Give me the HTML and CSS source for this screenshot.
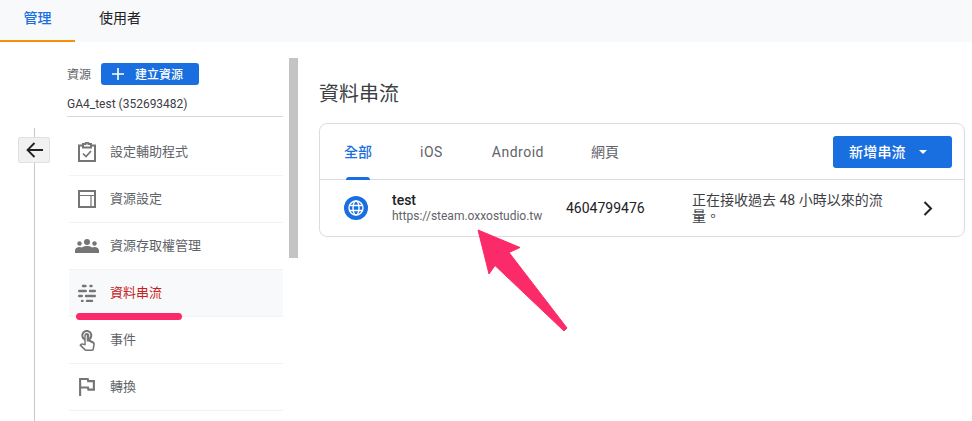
FILE: index.html
```html
<!DOCTYPE html>
<html lang="zh-Hant">
<head>
  <meta charset="UTF-8" />
  <meta name="viewport" content="width=device-width, initial-scale=1.0"/>
  <title>資料串流</title>
  <link rel="stylesheet" href="styles.css">
</head>
<body>
  <header class="topbar">
    <a class="top-tab active">管理</a>
    <a class="top-tab">使用者</a>
  </header>

  <div class="content">
    <div class="rail">
      <button class="back" aria-label="返回">
        <svg width="17" height="16" viewBox="0 0 17 16"><path d="M17 8H2M8.500 1L1.500 8l7 7" fill="none" stroke="#222" stroke-width="1.800"/></svg>
      </button>
    </div>

    <aside class="sidebar">
      <div class="prop-head">
        <span class="prop-label">資源</span>
        <button class="btn-create">
          <svg width="12" height="12" viewBox="0 0 12 12"><path d="M6 0v12M0 6h12" stroke="#fff" stroke-width="1.600"/></svg>
          <span>建立資源</span>
        </button>
      </div>
      <div class="prop-name">GA4_test (352693482)</div>

      <ul class="menu">
        <li class="menu-item">
          <svg class="ico" width="18" height="20" viewBox="0 0 18 20"><path d="M5 3.500H1v15.500h16V3.500h-4M5 5.500V2h2.500a1.500 1.500 0 0 1 3 0H13v3.500z" fill="none" stroke="#757575" stroke-width="2"/><path d="M5 11.500l3 3 5-5.500" fill="none" stroke="#757575" stroke-width="1.700"/></svg>
          <span>設定輔助程式</span>
        </li>
        <li class="menu-item">
          <svg class="ico" width="18" height="18" viewBox="0 0 18 18"><path d="M1 1h16v16H1z" fill="none" stroke="#757575" stroke-width="2"/><path d="M1 5.500h16M13 5.500V17" fill="none" stroke="#757575" stroke-width="1.200"/></svg>
          <span>資源設定</span>
        </li>
        <li class="menu-item">
          <svg class="ico" width="24" height="14" viewBox="0 0 24 14"><g fill="#757575"><circle cx="12" cy="3" r="3"/><circle cx="4.500" cy="4.500" r="2.200"/><circle cx="19.500" cy="4.500" r="2.200"/><path d="M0 14v-2.500C0 9.500 2 8 4.500 8c1 0 1.800.2 2.500.500C8 7.500 10 7 12 7s4 .5 5 1.500c.7-.3 1.500-.5 2.500-.5C22 8 24 9.500 24 11.500V14z"/></g></svg>
          <span>資源存取權管理</span>
        </li>
        <li class="menu-item current">
          <svg class="ico" width="18" height="18" viewBox="0 0 18 18"><g stroke="#757575" stroke-width="2.400" stroke-linecap="round"><path d="M5 2h2.500M12.500 2h1M1.200 7h6.600M12 7h4.800M1.200 12h2.600M8 12h8.800M4 17h.5M9 17h5"/></g></svg>
          <span>資料串流</span>
        </li>
        <li class="menu-item">
          <svg class="ico" width="17" height="21" viewBox="4 1 15.500 21"><path fill="#757575" d="M18.190 12.440l-3.240-1.620c1.290-1 2.120-2.560 2.120-4.320 0-3.030-2.470-5.500-5.500-5.500s-5.500 2.470-5.500 5.500c0 2.130 1.220 3.980 3 4.890v3.260c-2.150-.46-2.020-.44-2.260-.44-.53 0-1.030.21-1.410.59L4 16.220l5.090 5.090C9.520 21.750 10.120 22 10.740 22h6.050c.98 0 1.810-.7 1.970-1.670l.8-4.710c.22-1.300-.43-2.590-1.370-3.180zm-.17 2.850l-.8 4.710c-.04.24-.25.42-.49.42H10.740c-.13 0-.26-.05-.35-.15l-3.980-3.980.51-.51 3.580.75V6.500c0-.28.22-.5.5-.5s.5.22.5.5v6h1.760l4.240 2.120c.2.1.31.32.27.56zM8.070 6.500c0-1.980 1.610-3.500 3.500-3.500s3.500 1.520 3.500 3.500c0 .95-.38 1.810-1 2.440V6.500c0-1.380-1.120-2.500-2.500-2.500s-2.500 1.120-2.500 2.500v2.440c-.62-.63-1-1.490-1-2.440z"/></svg>
          <span>事件</span>
        </li>
        <li class="menu-item">
          <svg class="ico" width="15" height="18" viewBox="5 4 15 17"><path fill="#757575" d="M12.360 6l.4 2H18v6h-3.360l-.4-2H7V6h5.360M14 4H5v17h2v-7h5.600l.4 2h7V6h-5.600L14 4z"/></svg>
          <span>轉換</span>
        </li>
      </ul>
    </aside>

    <div class="scrollbar"></div>

    <main class="main">
      <h1 class="title">資料串流</h1>
      <section class="card">
        <div class="tabs">
          <a class="tab active">全部</a>
          <a class="tab latin tab-ios">iOS</a>
          <a class="tab latin tab-android">Android</a>
          <a class="tab tab-web">網頁</a>
          <button class="btn-add"><span>新增串流</span><i class="caret"></i></button>
        </div>
        <div class="stream">
          <svg class="globe" width="24" height="24" viewBox="0 0 24 24">
            <circle cx="12" cy="12" r="12" fill="#1a6fe0"/>
            <g fill="none" stroke="#fff" stroke-width="1.400">
              <circle cx="12" cy="12" r="7"/>
              <ellipse cx="12" cy="12" rx="3" ry="7"/>
              <path d="M5.500 9.500h13M5.500 14.500h13"/>
            </g>
          </svg>
          <div class="stream-name">
            <strong>test</strong>
            <span>https://steam.oxxostudio.tw</span>
          </div>
          <div class="stream-id">4604799476</div>
          <div class="stream-status">正在接收過去 48 小時以來的流量。</div>
          <svg class="chevron" width="10" height="15" viewBox="0 0 10 15"><path d="M1.500 1l6.500 6.500L1.500 14" fill="none" stroke="#202124" stroke-width="2"/></svg>
        </div>
      </section>
    </main>
  </div>

  <div class="mark-line"></div>
  <svg class="mark-arrow" width="92" height="104" viewBox="0 0 92 104">
    <path d="M2 2L44 19.500 33 24.500 91 100 88 103 19 37.500 13 46z" fill="#fb2a68" stroke="#fb2a68" stroke-width="1" stroke-linejoin="round"/>
  </svg>
</body>
</html>
```

FILE: styles.css
```css
:root {
  --azul: #1a6fe0;
  --texto: #3c4043;
  --gris: #5f6368;
  --linea: #e8eaed;
  --rosa: #fb2a68;
}

html, body {
  height: 100%;
}

body {
  margin: 0;
  position: relative;
  overflow: hidden;
  background: #fff;
  color: var(--texto);
  font-family: Roboto, "Noto Sans CJK TC", sans-serif;
}

.topbar {
  display: flex;
  height: 42px;
  background: #f8f9fa;
}

.top-tab {
  width: 75px;
  height: 42px;
  box-sizing: border-box;
  padding-top: 8px;
  text-align: center;
  font-size: 14px;
  line-height: 20px;
  color: #202124;
}

.top-tab.active {
  color: var(--azul);
  font-weight: 500;
  border-bottom: 2px solid #f79009;
}

.top-tab + .top-tab {
  width: 90px;
}

.content {
  display: flex;
  height: 379px;
}

.rail {
  position: relative;
  width: 67px;
  flex: none;
  margin-top: 86px;
}

.rail::before {
  content: "";
  position: absolute;
  left: 34px;
  top: 0;
  bottom: 0;
  width: 1px;
  background: #c8c8c8;
}

.back {
  position: absolute;
  left: 18px;
  top: 9px;
  width: 32px;
  height: 26px;
  padding: 0;
  display: flex;
  align-items: center;
  justify-content: center;
  background: #f1f1f1;
  border: 1px solid #e0e0e0;
  border-radius: 2px;
}

.sidebar {
  width: 216px;
  flex: none;
  padding-top: 21px;
}

.prop-head {
  display: flex;
  align-items: center;
  gap: 10px;
  height: 22px;
}

.prop-label {
  padding-bottom: 2px;
  font-size: 12px;
  color: var(--gris);
}

.btn-create {
  display: flex;
  align-items: center;
  width: 98px;
  height: 22px;
  padding: 0 0 0 11px;
  gap: 11px;
  border: none;
  border-radius: 3px;
  background: var(--azul);
  color: #fff;
  font: 500 12px Roboto, "Noto Sans CJK TC", sans-serif;
}

.btn-create span {
  padding-bottom: 2px;
}

.prop-name {
  height: 31px;
  line-height: 38px;
  font-size: 12px;
  color: var(--texto);
  border-bottom: 1px solid #d8d8d8;
}

.menu {
  list-style: none;
  margin: 12px 0 0 2px;
  padding: 0;
}

.menu-item {
  display: flex;
  align-items: center;
  height: 46px;
  font-size: 13px;
  color: var(--gris);
  border-bottom: 1px solid #f1f3f4;
}

.menu-item span {
  padding-bottom: 4px;
}

.menu-item .ico {
  flex: none;
  margin-left: 6px;
  width: 24px;
  margin-right: 11px;
}

.menu-item.current {
  background: #f8f9fa;
  color: #c5221f;
}

.scrollbar {
  width: 9px;
  height: 200px;
  flex: none;
  margin: 16px 0 0 6px;
  background: #c4c4c4;
}

.main {
  width: 646px;
  flex: none;
  margin-left: 21px;
}

.title {
  margin: 39px 0 15px;
  font-size: 20px;
  line-height: 27px;
  font-weight: 400;
  color: var(--texto);
}

.card {
  height: 114px;
  box-sizing: border-box;
  border: 1px solid #dadce0;
  border-radius: 8px;
}

.tabs {
  display: flex;
  align-items: center;
  height: 56px;
  box-sizing: border-box;
  padding: 0 12px 0 24px;
  border-bottom: 1px solid #dadce0;
}

.tab {
  position: relative;
  font-size: 14px;
  line-height: 54px;
  color: var(--gris);
}

.tab.latin {
  letter-spacing: .5px;
}

.tab.active {
  color: var(--azul);
  font-weight: 500;
}

.tab.active::after {
  content: "";
  position: absolute;
  left: 2px;
  right: 2px;
  bottom: -1px;
  height: 3px;
  border-radius: 3px 3px 0 0;
  background: var(--azul);
}

.tab-ios {
  margin-left: 48px;
}

.tab-android {
  margin-left: 49px;
}

.tab-web {
  margin-left: 47px;
}

.btn-add {
  display: flex;
  align-items: center;
  gap: 13px;
  width: 119px;
  height: 32px;
  margin-left: auto;
  padding: 0 0 0 16px;
  border: none;
  border-radius: 3px;
  background: var(--azul);
  color: #fff;
  font: 500 14px Roboto, "Noto Sans CJK TC", sans-serif;
}

.btn-add span {
  padding-bottom: 2px;
  letter-spacing: .2px;
}

.caret {
  width: 0;
  height: 0;
  border-left: 4px solid transparent;
  border-right: 4px solid transparent;
  border-top: 4px solid #fff;
}

.stream {
  display: flex;
  align-items: center;
  height: 56px;
  padding-left: 24px;
}

.globe {
  flex: none;
}

.stream-name {
  display: flex;
  flex-direction: column;
  width: 174px;
  margin-left: 24px;
  flex: none;
}

.stream-name strong {
  font-size: 14px;
  line-height: 17px;
  font-weight: 500;
  color: #202124;
}

.stream-name span {
  font-size: 12px;
  line-height: 15px;
  color: var(--gris);
}

.stream-id {
  width: 126px;
  flex: none;
  font-size: 14px;
  color: #202124;
}

.stream-status {
  width: 195px;
  flex: none;
  font-size: 14px;
  line-height: 16px;
  color: var(--texto);
}

.chevron {
  flex: none;
  margin-left: 36px;
}

.mark-line {
  position: absolute;
  left: 76px;
  top: 313px;
  width: 106px;
  height: 7px;
  border-radius: 4px;
  background: var(--rosa);
}

.mark-arrow {
  position: absolute;
  left: 476px;
  top: 228px;
}
```
